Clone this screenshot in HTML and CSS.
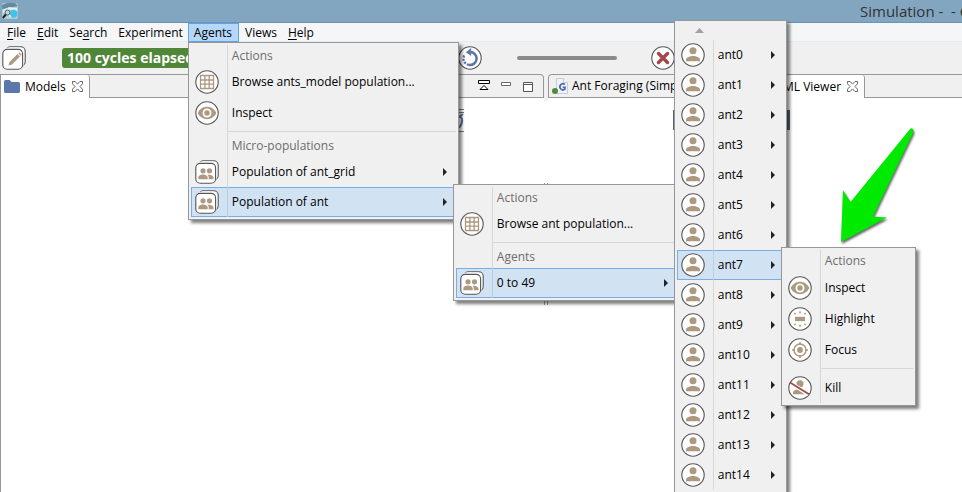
FILE: index.html
```html
<!DOCTYPE html>
<html lang="en">
<head>
<meta charset="utf-8">
<title>Simulation</title>
<link rel="stylesheet" href="styles.css">
</head>
<body>
<svg class="defs" aria-hidden="true">
  <defs>
    <symbol id="disc" viewBox="0 0 24 24"><circle cx="12" cy="12" r="11.2" fill="#fff" stroke="#555" stroke-width="1.1"/></symbol>
    <symbol id="stack" viewBox="0 0 24 24">
      <rect x="4" y=".8" width="19.2" height="19.2" rx="4.5" fill="#fff" stroke="#555" stroke-width="1.1"/>
      <rect x="2.4" y="2" width="19.2" height="19.2" rx="4.5" fill="#fff" stroke="#fff" stroke-width="1"/>
      <rect x=".8" y="3.4" width="19.8" height="19.8" rx="4.5" fill="#fff" stroke="#555" stroke-width="1.1"/>
    </symbol>
    <symbol id="grid" viewBox="0 0 24 24"><use href="#disc"/>
      <path d="M5.5 5.5h13v13h-13zM5.5 10h13M5.5 14.2h13M9.9 5.5v13M14.2 5.5v13" fill="none" stroke="#ad9880" stroke-width="1.3"/></symbol>
    <symbol id="eye" viewBox="0 0 24 24"><use href="#disc"/>
      <path d="M2.700 12C6.500 3.800 17.500 3.800 21.300 12C17.500 20.200 6.500 20.200 2.700 12z" fill="#ad9880"/>
      <circle cx="12" cy="12" r="4.500" fill="#fff"/><circle cx="12" cy="12" r="2.700" fill="#ad9880"/></symbol>
    <symbol id="people" viewBox="0 0 24 24"><use href="#stack"/>
      <g fill="#ad9880"><circle cx="8" cy="10.800" r="2.600"/><circle cx="14.500" cy="10.800" r="2.600"/>
      <path d="M3.300 19.200v-1.600c0-2 2.700-3 4.700-3s4.700 1 4.700 3v1.600zM13.700 19.200v-1.600c0-1.200-.5-2.100-1.200-2.800 2.500-.6 6 .7 6 2.800v1.600z"/></g></symbol>
    <symbol id="person" viewBox="0 0 24 24"><use href="#disc"/>
      <g fill="#ad9880"><circle cx="12" cy="7.800" r="3.500"/><path d="M5 18.200v-1.500c0-2.500 4.300-3.700 7-3.700s7 1.200 7 3.700v1.500z"/></g></symbol>
    <symbol id="highlight" viewBox="0 0 24 24"><use href="#disc"/>
      <path d="M7 9.800h10v4.400H7z" fill="#ad9880"/>
      <path d="M12 4.300v2M12 17.700v2M6.300 6l1.300 1.300M17.700 6l-1.300 1.300M6.300 18l1.300-1.300M17.700 18l-1.300-1.300" stroke="#ad9880" stroke-width="1.500"/></symbol>
    <symbol id="focus" viewBox="0 0 24 24"><use href="#disc"/>
      <circle cx="12" cy="12" r="6" fill="none" stroke="#ad9880" stroke-width="1.500"/><circle cx="12" cy="12" r="2.900" fill="#ad9880"/>
      <path d="M12 4v3M12 17v3M4 12h3M17 12h3" stroke="#ad9880" stroke-width="1.500"/></symbol>
    <symbol id="kill" viewBox="0 0 24 24"><use href="#person"/>
      <path d="M3.500 7.600l17 10.600" stroke="#fff" stroke-width="4"/><path d="M2 6.500l19 11.800" stroke="#9f4a4c" stroke-width="1.800"/></symbol>
    <symbol id="close" viewBox="0 0 11 11"><path d="M.5.5h2.600l2.400 2.600L7.900.5h2.600v2.300L8 5.500l2.500 2.700v2.300H7.900L5.500 7.900l-2.400 2.600H.5V8.200L3 5.500.5 2.800z" fill="#fff" stroke="#666"/></symbol>
    <symbol id="reload" viewBox="0 0 24 24"><use href="#disc"/>
      <path d="M12 6a6.500 6.500 0 1 1-1 12.900" fill="none" stroke="#5c78aa" stroke-width="2.600"/>
      <path d="M11 18.900a6.500 6.500 0 0 1-4-10.700" fill="none" stroke="#5c78aa" stroke-width="2.400" stroke-dasharray="2.200 1.200"/>
      <path d="M7.800 6.200l5.400-4.200v8z" fill="#5c78aa"/></symbol>
  </defs>
</svg>

<header class="titlebar">
  <svg class="app-icon" viewBox="0 0 16 16" aria-hidden="true">
    <rect width="16" height="16" rx="2" fill="#b4cbd3"/><path d="M0 2l5-2h8l3 3-8 2-8 1z" fill="#5f8ca3"/>
    <path d="M1 7l6-3 8 1v3l-7-1-7 3z" fill="#e6edec"/><circle cx="11.500" cy="10.800" r="4" fill="#42c4ec"/>
    <path d="M8 8a4 4 0 0 0 1 6" fill="none" stroke="#e8f8fc" stroke-width="1.500"/><circle cx="5.500" cy="9.500" r="2.500" fill="#bed5d9" stroke="#4a6570"/>
    <path d="M3.800 11.500L.8 15" stroke="#222" stroke-width="2"/>
  </svg>
  <h1 class="title">Simulation -&nbsp; - G</h1>
</header>

<nav aria-label="Main">
<ul class="menubar">
  <li><button><u>F</u>ile</button></li>
  <li><button><u>E</u>dit</button></li>
  <li><button>Se<u>a</u>rch</button></li>
  <li><button>Experiment</button></li>
  <li class="open"><button aria-expanded="true">Agents</button>
    <ul class="menu agents-menu">
      <li class="heading">Actions</li>
      <li><button class="item"><svg><use href="#grid"/></svg><span>Browse ants_model population...</span></button></li>
      <li><button class="item tall"><svg><use href="#eye"/></svg><span>Inspect</span></button></li>
      <li class="separator"></li>
      <li class="heading">Micro-populations</li>
      <li><button class="item more"><svg><use href="#people"/></svg><span>Population of ant_grid</span></button></li>
      <li class="open"><button class="item more" aria-expanded="true"><svg><use href="#people"/></svg><span>Population of ant</span></button>
        <ul class="menu population-menu">
          <li class="heading">Actions</li>
          <li><button class="item"><svg><use href="#grid"/></svg><span>Browse ant population...</span></button></li>
          <li class="separator"></li>
          <li class="heading">Agents</li>
          <li class="open"><button class="item more" aria-expanded="true"><svg><use href="#people"/></svg><span>0 to 49</span></button>
            <ul class="menu range-menu">
              <li class="scroll-up"><svg viewBox="0 0 9 5"><path d="M4.500 0L9 5H0z" fill="#a0a0a0"/></svg></li>
              <li><button class="item more"><svg><use href="#person"/></svg><span>ant0</span></button></li>
              <li><button class="item more"><svg><use href="#person"/></svg><span>ant1</span></button></li>
              <li><button class="item more"><svg><use href="#person"/></svg><span>ant2</span></button></li>
              <li><button class="item more"><svg><use href="#person"/></svg><span>ant3</span></button></li>
              <li><button class="item more"><svg><use href="#person"/></svg><span>ant4</span></button></li>
              <li><button class="item more"><svg><use href="#person"/></svg><span>ant5</span></button></li>
              <li><button class="item more"><svg><use href="#person"/></svg><span>ant6</span></button></li>
              <li class="open"><button class="item more" aria-expanded="true"><svg><use href="#person"/></svg><span>ant7</span></button>
                <ul class="menu agent-menu">
                  <li class="heading">Actions</li>
                  <li><button class="item tall"><svg><use href="#eye"/></svg><span>Inspect</span></button></li>
                  <li><button class="item tall"><svg><use href="#highlight"/></svg><span>Highlight</span></button></li>
                  <li><button class="item tall"><svg><use href="#focus"/></svg><span>Focus</span></button></li>
                  <li class="separator"></li>
                  <li><button class="item tall"><svg><use href="#kill"/></svg><span>Kill</span></button></li>
                </ul>
              </li>
              <li><button class="item more"><svg><use href="#person"/></svg><span>ant8</span></button></li>
              <li><button class="item more"><svg><use href="#person"/></svg><span>ant9</span></button></li>
              <li><button class="item more"><svg><use href="#person"/></svg><span>ant10</span></button></li>
              <li><button class="item more"><svg><use href="#person"/></svg><span>ant11</span></button></li>
              <li><button class="item more"><svg><use href="#person"/></svg><span>ant12</span></button></li>
              <li><button class="item more"><svg><use href="#person"/></svg><span>ant13</span></button></li>
              <li><button class="item more"><svg><use href="#person"/></svg><span>ant14</span></button></li>
            </ul>
          </li>
        </ul>
      </li>
    </ul>
  </li>
  <li><button>Views</button></li>
  <li><button><u>H</u>elp</button></li>
</ul>
</nav>

<div class="toolbar">
  <button class="tool" aria-label="Edit model"><svg viewBox="0 0 24 24"><use href="#stack"/>
    <path d="M6.500 19.500l1-3.500 8-8 2.500 2.500-8 8z" fill="#ad9880"/><path d="M16.300 7.200l1-1 2.500 2.500-1 1z" fill="#ad9880"/></svg></button>
  <output class="status">100 cycles elapsed</output>
  <button class="tool" aria-label="Reload"><svg><use href="#reload"/></svg></button>
  <input class="speed" type="range" aria-label="Speed">
  <button class="tool" aria-label="Close experiment"><svg viewBox="0 0 24 24"><use href="#disc"/><path d="M7.500 7.500l9 9M16.500 7.500l-9 9" stroke="#a2484b" stroke-width="3.500" stroke-linecap="round"/></svg></button>
</div>

<main class="workbench">
  <section class="pane left-pane">
    <div class="tabs">
      <button class="tab active"><svg class="folder" viewBox="0 0 16 13"><path d="M0 1.500Q0 0 1.500 0h4l2 2h7Q16 2 16 3.500v8q0 1.500-1.500 1.500h-13Q0 13 0 11.500z" fill="#5c78aa"/></svg>Models<svg class="close"><use href="#close"/></svg></button>
      <div class="pane-actions">
        <button aria-label="Collapse"><svg viewBox="0 0 12 12"><path d="M.5.5h11v3H.500zM6 5.500l-4 4h8z" fill="#fff" stroke="#000"/></svg></button>
        <button aria-label="Minimize"><svg viewBox="0 0 12 12"><path d="M1.500 2.500h9v3h-9z" fill="#fff" stroke="#666"/></svg></button>
        <button aria-label="Maximize"><svg viewBox="0 0 12 12"><path d="M1.500 2.500h9v9h-9zM1.500 4.500h9" fill="#fff" stroke="#555"/></svg></button>
      </div>
    </div>
    <div class="view"><svg class="view-tool" viewBox="19 0 5 24"><path d="M18 1.500h6M18 4.500h6M18 23.500h6" stroke="#777"/><path d="M18 9q5-1 4 5t-5 5M19 9l4-3" fill="none" stroke="#5c78aa" stroke-width="2"/></svg></div>
  </section>
  <div class="splitter"><span class="bar"></span><span class="tick"></span><span class="tick end"></span></div>
  <section class="pane right-pane">
    <div class="tabs">
      <button class="tab model"><svg class="file" viewBox="0 0 16 16"><path d="M4.500.5h7l4 4v11h-11z" fill="#eef3fb" stroke="#c3cddd"/><path d="M11.500.5v4h4" fill="#fff" stroke="#c3cddd"/><path d="M12.800 6.500a3 3 0 1 0 .2 4.500V9.300h-2.300" fill="none" stroke="#5069a5" stroke-width="1.700"/><circle cx="3" cy="13" r="3" fill="#4f8b38"/></svg>Ant Foraging (Simp</button>
      <button class="tab active viewer">ML Viewer<svg class="close"><use href="#close"/></svg></button>
    </div>
    <div class="view"><span class="display-bar"></span></div>
  </section>
</main>

<svg class="pointer" viewBox="0 0 80 120" aria-hidden="true"><path d="M71.500 0.500Q75-.500 74.500 4L34 88.500 48 89.500 2 114 4 62 11.500 74z" fill="#00ea00"/></svg>
</body>
</html>
```
FILE: styles.css
```css
* { box-sizing: border-box; }
body {
  margin: 0;
  height: 100vh;
  display: flex;
  flex-direction: column;
  position: relative;
  overflow: hidden;
  background: #fff;
  color: #000;
  font: 12px/16px "Segoe UI", "Open Sans", sans-serif;
}
button { font: inherit; color: inherit; background: none; border: 0; padding: 0; margin: 0; text-align: left; white-space: nowrap; }
ul { list-style: none; margin: 0; padding: 0; }
svg { display: block; flex: none; }
.defs { position: absolute; width: 0; height: 0; }

.titlebar {
  display: flex;
  align-items: center;
  justify-content: space-between;
  height: 23px;
  padding-left: 2px;
  background: #82a6c0;
  border-bottom: 1px solid #6993b2;
  overflow: hidden;
  flex: none;
}
.app-icon { width: 16px; height: 16px; }
.title { margin: 0; width: 102px; font-size: 15px; line-height: 22px; font-weight: 400; color: #333; white-space: nowrap; }

.menubar { display: flex; height: 19px; padding-left: 1px; background: #f5f6f8; border-bottom: 1px solid #e6ebf0; }
.menubar > li { position: relative; height: 19px; }
.menubar > li > button { height: 19px; padding: 0 5px 0 6px; }
.menubar > .open > button { padding-right: 7px; background: #b5d7fa; box-shadow: inset 0 0 0 1px #62a3e4; }
u { text-underline-offset: 2px; }

.menu {
  position: absolute;
  z-index: 2;
  padding: 2px;
  border: 1px solid #979797;
  background: #f0f0f0;
  box-shadow: 3px 3px 3px rgba(0, 0, 0, .5);
}
.menu li { position: relative; }
.heading, .item { position: relative; display: flex; align-items: center; width: 100%; }
.heading { height: 22px; padding-left: 41px; color: #6d6d6d; }
.item { height: 30px; padding-left: 4px; }
.item.tall { height: 31px; }
.item svg { width: 24px; height: 24px; margin-right: 13px; }
.menu > li:not(.scroll-up)::before {
  content: "";
  position: absolute;
  z-index: 1;
  left: 36px;
  top: 0;
  bottom: 0;
  border-left: 1px solid #d7d7d7;
}
.menu > .open > .item { background: #d1e2f2; box-shadow: inset 0 0 0 1px #78aee5; }
.menu > li.open::before { border-color: #b9cfe3; }
.more::after {
  content: "";
  margin-left: auto;
  margin-right: 9px;
  border: 4px solid transparent;
  border-left-color: #222;
  border-right: 0;
}
.separator { height: 7px; padding: 3px 0 3px 37px; }
.separator::after { content: ""; display: block; border-top: 1px solid #d7d7d7; }
.agents-menu { left: 0; top: 100%; width: 271px; }
.menu .menu { left: calc(100% - 3px); top: -3px; }
.menu .population-menu { width: 227px; }
.menu .range-menu { width: 113px; height: 480px; top: -248px; }
.menu .agent-menu { width: 135px; }
.scroll-up { height: 17px; padding: 5px 0 0 18px; }
.scroll-up svg { width: 9px; height: 5px; }

.toolbar { display: flex; align-items: center; height: 32px; padding-left: 2px; background: #f0f0f0; flex: none; }
.tool svg { width: 24px; height: 24px; }
.status {
  width: 360px;
  height: 20px;
  margin: 0 36px;
  padding-left: 5px;
  border-radius: 3px;
  background: #4f8638;
  color: #fff;
  font: 700 14px/20px "Segoe UI", "Open Sans", sans-serif;
}
.speed { appearance: none; width: 100px; height: 4px; margin: 0 34px 0 35px; border-radius: 2px; background: #8a8a8a; }
.speed::-webkit-slider-thumb { appearance: none; width: 0; height: 0; }

.workbench { flex: 1; display: flex; min-height: 0; }
.pane { display: flex; flex-direction: column; min-width: 0; }
.left-pane { flex: 0 0 544px; border-left: 1px solid #979797; }
.right-pane { flex: 1; }
.tabs { display: flex; height: 24px; background: #f0f0f0; border-top: 1px solid #979797; border-bottom: 1px solid #979797; }
.left-pane .tabs { border-right: 1px solid #979797; border-radius: 0 4px 0 0; }
.right-pane .tabs { border-left: 1px solid #979797; border-radius: 4px 0 0 0; }
.tab { display: flex; align-items: center; height: 22px; overflow: hidden; }
.tab.active { height: 23px; padding: 0 6px 0 3px; background: #fff; border-right: 1px solid #979797; border-radius: 0 3px 0 0; }
.close { width: 11px; height: 11px; margin-left: 6px; }
.folder { width: 16px; height: 13px; margin-right: 5px; }
.file { width: 16px; height: 16px; margin-right: 4px; }
.tab.model { width: 230px; padding-left: 3px; }
.tab.viewer { padding-left: 4px; }
.pane-actions { display: flex; align-items: center; gap: 10px; margin-left: auto; padding-right: 9px; }
.pane-actions svg { width: 12px; height: 12px; }
.view { flex: 1; display: flex; justify-content: flex-end; background: #fff; padding: 10px 80px 0 0; }
.view-tool { width: 5px; height: 24px; }
.right-pane .view { justify-content: flex-start; padding: 12px 0 0 125px; }
.display-bar { width: 117px; height: 20px; background: #59636e; }
.splitter { display: flex; flex-direction: column; width: 4px; background: #fff; }
.bar { height: 27px; background: #f0f0f0; }
.tick { height: 1px; margin: 82px 0 0; border: 1px solid #999; border-width: 0 1px; }
.tick.end { height: 4px; margin-top: 117px; }

.pointer {
  position: absolute;
  left: 839px;
  top: 128px;
  width: 80px;
  height: 120px;
  z-index: 1;
  filter: drop-shadow(1px 2px 1px rgba(0, 0, 0, .6));
}
```
